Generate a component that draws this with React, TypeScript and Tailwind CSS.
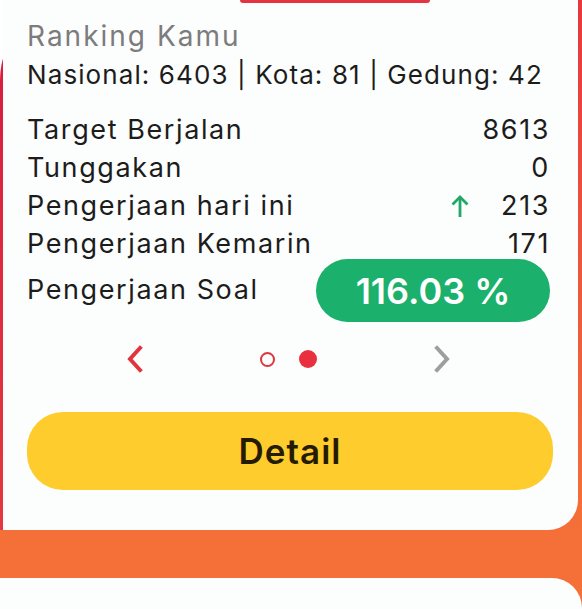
import React from "react";

const UpArrow = () => (
  <svg viewBox="0 0 18 24" className="mr-[32px] h-[24px] w-[18px]" fill="none" stroke="#22a866" strokeWidth={2.8}>
    <polyline points="9,23 9,3" />
    <polyline points="1.5,10.5 9,3 16.5,10.5" />
  </svg>
);

const Row = ({ label, value, arrow }: { label: string; value: string; arrow?: boolean }) => (
  <div className="flex h-[38px] items-center justify-between whitespace-nowrap">
    <span>{label}</span>
    <span className="flex items-center">
      {arrow && <UpArrow />}
      {value}
    </span>
  </div>
);

export default function App() {
  return (
    <div
      className="h-[609px] w-[582px] overflow-hidden bg-white"
      style={{ fontFamily: "Inter, 'Noto Sans', sans-serif" }}
    >
      <div className="rounded-tl-[80px] bg-gradient-to-br from-[#d8173f] via-[#e5373f] to-[#f47038] pl-[3px] pr-[4px]">
        <div className="flex h-[530px] flex-col rounded-br-[30px] bg-[#fcfdfd] pl-[24px] pr-[28px]">
          <div className="ml-[213px] h-[3px] w-[190px] rounded-b-full bg-[#e53342]" />
          <div className="mt-[14px] flex h-[38px] items-center whitespace-nowrap text-[28px] tracking-[2px] text-[#7c7c7c]">
            Ranking Kamu
          </div>
          <div className="flex h-[38px] items-center whitespace-nowrap text-[26px] tracking-[1.1px] text-[#1c1c1c]">
            Nasional: 6403 | Kota: 81 | Gedung: 42
          </div>
          <div className="mt-[18px] flex flex-col text-[27px] tracking-[1.6px] text-[#1c1c1c]">
            <Row label="Target Berjalan" value="8613" />
            <Row label="Tunggakan" value="0" />
            <Row label="Pengerjaan hari ini" value="213" arrow />
            <Row label="Pengerjaan Kemarin" value="171" />
            <div className="-mt-[4px] flex h-[63px] items-center justify-between whitespace-nowrap">
              <span>Pengerjaan Soal</span>
              <div className="flex h-[63px] w-[234px] items-center justify-center rounded-full bg-[#1bb06b] text-[36px] font-semibold tracking-normal text-white">
                116.03 %
              </div>
            </div>
          </div>
          <div className="mt-[18px] flex h-[38px] items-center">
            <svg viewBox="0 0 16 28" className="ml-[100px] h-[28px] w-[16px]" fill="none" stroke="#e0343f" strokeWidth={4} strokeLinecap="square">
              <polyline points="13,3 3,14 13,25" />
            </svg>
            <div className="ml-[117px] h-[15px] w-[15px] rounded-full border-[2.5px] border-[#e0343f]" />
            <div className="ml-[24px] h-[18px] w-[18px] rounded-full bg-[#e8303f]" />
            <svg viewBox="0 0 16 28" className="ml-[117px] h-[28px] w-[16px]" fill="none" stroke="#9e9e9e" strokeWidth={4} strokeLinecap="square">
              <polyline points="3,3 13,14 3,25" />
            </svg>
          </div>
          <button className="mt-[34px] flex h-[78px] w-[526px] items-center justify-center rounded-[36px] bg-[#ffcc2d] text-[35px] font-semibold tracking-[1px] text-[#251c00]">
            Detail
          </button>
        </div>
      </div>
      <div className="bg-[#f47038] pt-[48px]">
        <div className="h-[40px] rounded-tr-[30px] bg-[#fcfdfd]" />
      </div>
    </div>
  );
}
